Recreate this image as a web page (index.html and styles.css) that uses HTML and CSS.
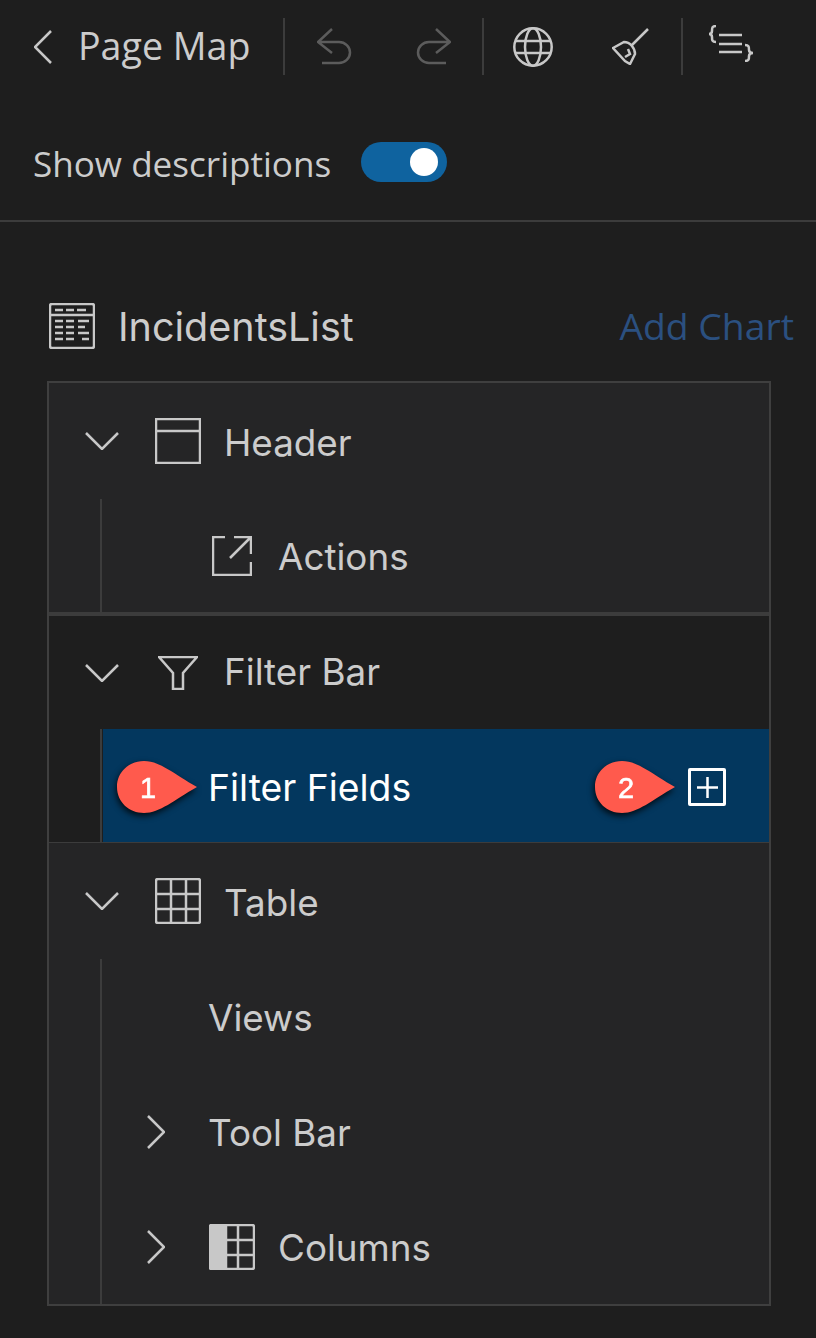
FILE: index.html
```html
<!doctype html>
<html>
<head>
	<meta charset="utf-8">
	<title>Page Map</title>
	<link rel="stylesheet" href="styles.css">
</head>
<body>
<header class="toolbar">
	<svg class="icon back" width="18" height="34" viewBox="0 0 18 34"><path d="M17 1 1 17l16 16"/></svg>
	<span class="toolbar-title">Page Map</span>
	<i class="sep sep-a"></i>
	<svg class="icon dim undo" width="36" height="37" viewBox="0 0 36 37"><path d="M15 1 1 14l14 11M1 14h21a11 10.500 0 0 1 0 21H5"/></svg>
	<svg class="icon dim redo" width="36" height="37" viewBox="0 0 36 37"><path d="M21 1l14 13-14 11M35 14H14a11 10.500 0 0 0 0 21h17"/></svg>
	<i class="sep sep-b"></i>
	<svg class="icon globe" width="40" height="40" viewBox="0 0 40 40"><circle cx="20" cy="20" r="18.700"/><ellipse cx="20" cy="20" rx="8" ry="18.700"/><path d="M3 14h34M3 26h34"/></svg>
	<svg class="icon broom" width="37" height="37" viewBox="0 0 37 37"><path d="M36 1 20 17M1 20l11-6c6 0 11 6 11 12l-5 10-5-3zM13 29l5-3-2-5"/></svg>
	<i class="sep sep-c"></i>
	<svg class="icon format" width="46" height="37" viewBox="0 0 46 37"><path d="M11 10h23M11 19h23M11 27h23M8 1C4 1 4 3 4 6c0 2-1 3-3 3 2 0 3 1 3 3 0 3 0 5 4 5M37 20c4 0 4 2 4 5 0 2 2 3 4 3-2 0-4 1-4 3 0 3 0 5-4 5"/></svg>
</header>

<div class="desc-row">
	<span class="desc-label">Show descriptions</span>
	<span class="toggle"><span class="knob"></span></span>
</div>

<main class="page">
	<div class="title-row">
		<svg class="icon" width="46" height="46" viewBox="0 0 46 46"><rect x="1" y="1" width="44" height="44" rx="2"/><path d="M1 12h44M6 7h8M17 7h8M28 7h9M6 18h8M17 18h8M29 18h11M6 24h8M17 24h8M29 24h7M6 30h8M17 30h8M29 30h11M6 36h8M17 36h8M33 36h7"/></svg>
		<span class="title">IncidentsList</span>
		<span class="add-chart">Add Chart</span>
	</div>

	<div class="tree">
		<section class="group">
			<div class="row head">
				<svg class="icon chev-down" width="34" height="18" viewBox="0 0 34 18"><path d="M1 1l16 16L33 1"/></svg>
				<svg class="icon" width="46" height="46" viewBox="0 0 46 46"><path d="M1 1h44v44H1zM1 13h44"/></svg>
				<span class="label">Header</span>
			</div>
			<div class="children">
				<div class="row leaf short">
					<svg class="icon action-icon" width="40" height="40" viewBox="0 0 40 40"><path d="M13 1H1v38h38V26M22 1h17v17M39 1 18 22"/></svg>
					<span class="label label-wide">Actions</span>
				</div>
			</div>
		</section>

		<section class="group group-dark">
			<div class="row head">
				<svg class="icon chev-down" width="34" height="18" viewBox="0 0 34 18"><path d="M1 1l16 16L33 1"/></svg>
				<span class="icon-slot"><svg class="icon" width="40" height="34" viewBox="0 0 40 34"><path d="M1 1h38L25 17v16H15V17z"/></svg></span>
				<span class="label">Filter Bar</span>
			</div>
			<div class="children">
				<div class="row leaf selected">
					<span class="label label-plain">Filter Fields</span>
					<span class="add-btn"><svg class="icon plus" width="21" height="21" viewBox="0 0 21 21"><path d="M0 10.500h21M10.500 0v21"/></svg></span>
					<svg class="callout callout-1" width="80" height="52" viewBox="0 0 80 52"><path d="M0 26C0 11 12 0 27 0c16 0 30 13 53 26C57 39 43 52 27 52 12 52 0 41 0 26z"/><text x="31" y="37">1</text></svg>
					<svg class="callout callout-2" width="80" height="52" viewBox="0 0 80 52"><path d="M0 26C0 11 12 0 27 0c16 0 30 13 53 26C57 39 43 52 27 52 12 52 0 41 0 26z"/><text x="31" y="37">2</text></svg>
				</div>
			</div>
		</section>

		<section class="group">
			<div class="row head">
				<svg class="icon chev-down" width="34" height="18" viewBox="0 0 34 18"><path d="M1 1l16 16L33 1"/></svg>
				<svg class="icon" width="46" height="46" viewBox="0 0 46 46"><rect x="1" y="1" width="44" height="44" rx="2"/><path d="M1 16h44M1 31h44M16 1v44M31 1v44"/></svg>
				<span class="label">Table</span>
			</div>
			<div class="children">
				<div class="row leaf"><span class="label label-plain">Views</span></div>
				<div class="row leaf">
					<svg class="icon chev-right" width="18" height="34" viewBox="0 0 18 34"><path d="M1 1l16 16L1 33"/></svg>
					<span class="label label-plain">Tool Bar</span>
				</div>
				<div class="row leaf">
					<svg class="icon chev-right" width="18" height="34" viewBox="0 0 18 34"><path d="M1 1l16 16L1 33"/></svg>
					<svg class="icon columns-icon" width="46" height="46" viewBox="0 0 46 46"><path class="fill" d="M1 3a2 2 0 0 1 2-2h14v44H3a2 2 0 0 1-2-2z"/><rect x="1" y="1" width="44" height="44" rx="2"/><path d="M17 16h28M17 31h28M29 1v44"/></svg>
					<span class="label">Columns</span>
				</div>
			</div>
		</section>
	</div>
</main>
</body>
</html>
```

FILE: styles.css
```css
html, body {
	margin: 0;
	padding: 0;
}
body {
	background: #1e1e1e;
	color: #cccccc;
	font-family: 'Open Sans', sans-serif;
	height: 1338px;
	overflow: hidden;
}

/* icons are all stroked line art */
.icon {
	display: block;
	flex: none;
	fill: none;
	stroke: #c8c8c8;
	stroke-width: 2.5;
}
.icon .fill {
	fill: #c8c8c8;
}
.dim {
	stroke: #5c5c5c;
}

.toolbar {
	display: flex;
	align-items: center;
	height: 57px;
	padding-top: 18px;
}
.back {
	margin-left: 34px;
}
.toolbar-title {
	font-size: 37.600px;
	line-height: 56px;
	padding-bottom: 1px;
	margin-left: 26px;
	width: 205px;
}
.sep {
	display: block;
	flex: none;
	width: 2px;
	height: 57px;
	background: #3c3c3c;
}
.undo {
	margin-left: 32px;
}
.redo {
	margin-left: 62px;
}
.sep-b {
	margin-left: 31px;
}
.globe {
	margin-left: 29px;
}
.broom {
	margin-left: 59px;
}
.sep-c {
	margin-left: 32px;
}
.format {
	margin-left: 25px;
	margin-top: -6px;
}

.desc-row {
	display: flex;
	align-items: center;
	height: 40px;
	padding: 67px 0 38px 33px;
	border-bottom: 2px solid #3c3c3c;
}
.desc-label {
	font-size: 35.100px;
	width: 328px;
	padding-top: 2px;
}
.toggle {
	display: flex;
	align-items: center;
	justify-content: flex-end;
	box-sizing: border-box;
	width: 86px;
	height: 40px;
	padding-right: 9px;
	border-radius: 20px;
	background: #0f639f;
}
.knob {
	display: block;
	width: 28px;
	height: 28px;
	margin-top: -1px;
	border-radius: 50%;
	background: #ffffff;
}

.page {
	padding-left: 47px;
}
.title-row {
	display: flex;
	align-items: center;
	height: 46px;
	padding: 81px 22px 0 2px;
}
.title {
	font-family: Inter, sans-serif;
	font-size: 39.500px;
	margin-left: 23px;
	padding-top: 2px;
}
.add-chart {
	font-size: 37.300px;
	color: #2b5080;
	margin-left: auto;
	padding-bottom: 2px;
}

.tree {
	box-sizing: border-box;
	width: 724px;
	margin-top: 32px;
	border: 2px solid #3f3f3f;
	background: #252526;
	font-family: Inter, sans-serif;
}
.group-dark {
	background: #1e1e1e;
	border-top: 4px solid #3c3c3c;
	border-bottom: 1px solid #3c3c3c;
}
.row {
	display: flex;
	align-items: center;
	box-sizing: border-box;
}
.head {
	height: 116px;
	padding-left: 36px;
}
.group-dark .head {
	height: 113px;
}
.group-dark .head .label {
	padding: 0 0 2px;
}
.chev-down {
	margin-right: 36px;
}
.icon-slot {
	display: flex;
	justify-content: center;
	width: 46px;
}
.label {
	font-size: 36.800px;
	margin-left: 23px;
	padding-top: 2px;
	white-space: nowrap;
}
.label-wide {
	margin-left: 26px;
}
.children {
	margin-left: 51px;
	border-left: 2px solid #3c3c3c;
}
.leaf {
	position: relative;
	height: 115px;
}
.short {
	height: 113px;
}
.label-plain {
	position: absolute;
	left: 106px;
	top: 50%;
	margin: 0;
	padding: 0;
	transform: translateY(-50%);
}
.action-icon {
	margin-left: 110px;
}
.chev-right {
	margin-left: 45px;
}
.columns-icon {
	margin-left: 44px;
}
.selected {
	background: #03375e;
	height: 113px;
	color: #ffffff;
	margin-left: 1px;
	justify-content: flex-end;
}
.selected .label-plain {
	left: 105px;
	top: 58px;
	font-size: 37.300px;
}
.add-btn {
	display: flex;
	align-items: center;
	justify-content: center;
	box-sizing: border-box;
	width: 38px;
	height: 38px;
	margin: 3px 43px 0 0;
	border: 3px solid #ffffff;
	border-radius: 2px;
}
.plus {
	stroke: #ffffff;
	stroke-width: 2.500;
}

/* numbered markers laid over the row */
.callout {
	position: absolute;
	top: 32px;
	overflow: visible;
	filter: drop-shadow(-1px 3px 3px rgba(0, 0, 0, 0.8));
}
.callout path {
	fill: #ff5a4d;
}
.callout text {
	fill: #ffffff;
	stroke: #ffffff;
	stroke-width: 0.6;
	font-family: 'Liberation Sans', sans-serif;
	font-size: 29px;
	text-anchor: middle;
}
.callout-1 {
	left: 14px;
}
.callout-2 {
	left: 492px;
}
```
